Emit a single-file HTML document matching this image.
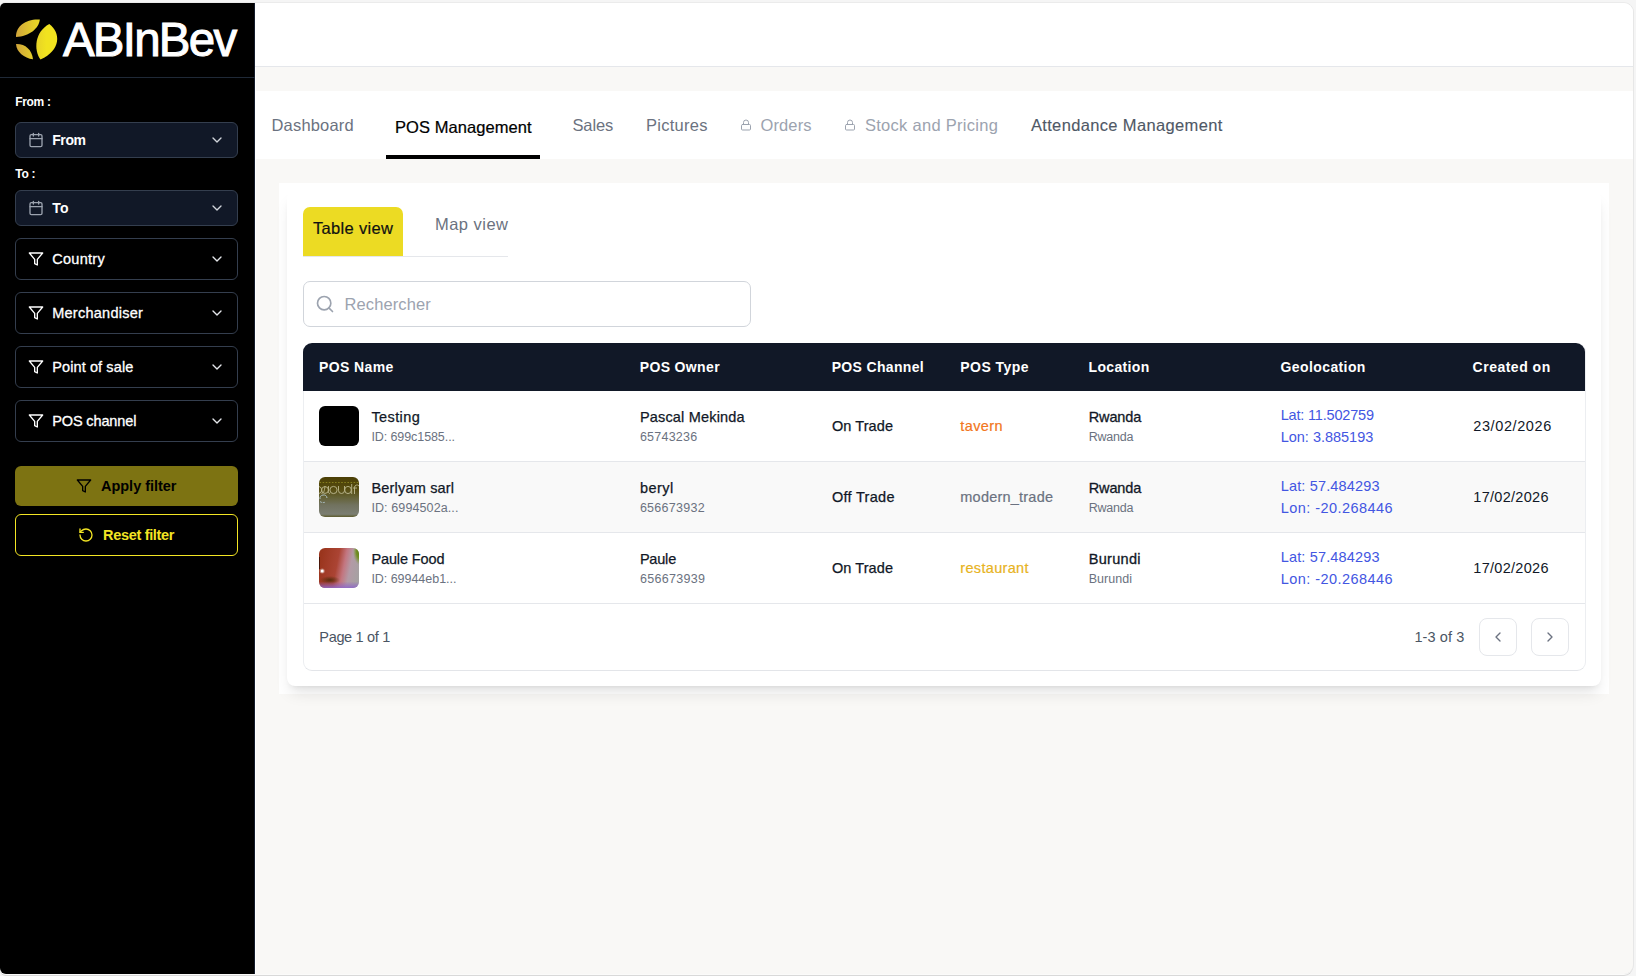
<!DOCTYPE html>
<html lang="en">
<head>
<meta charset="utf-8">
<title>POS Management</title>
<style>
*{box-sizing:border-box;margin:0;padding:0}
html,body{width:1636px;height:976px;overflow:hidden}
body{background:#f5f5f5;font-family:"Liberation Sans",sans-serif;color:#111827;position:relative}
.win{position:absolute;left:0;top:3px;width:1633px;height:971px;background:#f9f8f6;border-radius:5px 9px 9px 6px;overflow:hidden;box-shadow:1px 0 0 0 #e7e7e7,0 -1px 0 0 #ebebeb,0 1px 0 0 #fbfbfa,0 2px 0 0 #d9d9d9}
.topw{position:absolute;left:6px;top:2px;width:249px;height:1px;background:#fff}
.abs{position:absolute}
.grp{position:static;display:block}
.tx{position:absolute;white-space:nowrap;line-height:20px}
.side{position:absolute;left:0;top:0;width:255px;height:972px;background:#000;color:#fff;border-right:1px solid #151c2b;box-shadow:1px 0 0 0 #fff}
.logo{position:absolute;left:0;top:0;width:255px;height:75px;border-bottom:1px solid #1f2937}
.sel{position:absolute;left:15px;width:223px;border:1px solid #343e4e;border-radius:6px;background:#000}
.sel.date{background:#111827;border-color:#343e4e;height:36px}
.sel.flt{height:42px}
.btn{position:absolute;left:15px;width:223px;border-radius:6px}
.btn.apply{background:#7d7312}
.btn.reset{border:1px solid #f3e524;background:#000}
.top{position:absolute;left:255px;top:0;width:1378px;height:64px;background:#fff;border-bottom:1px solid #e5e7eb}
.tabs{position:absolute;left:255px;top:88px;width:1378px;height:68px;background:#fff}
.uline{position:absolute;left:131px;top:64px;width:154px;height:4px;background:#000}
.wrap{position:absolute;left:279px;top:180px;width:1330px;height:511px;background:#fff}
.card{position:absolute;left:287px;top:188px;width:1314px;height:495px;background:#fff;border-radius:8px;box-shadow:0 10px 15px -3px rgba(0,0,0,.1),0 4px 6px -4px rgba(0,0,0,.1)}
.vtab{position:absolute;left:303px;top:204px;width:100px;height:49px;background:#ecdb23;border-radius:7px 7px 0 0}
.vline{position:absolute;left:303px;top:253px;width:205px;height:1px;background:#e5e7eb}
.search{position:absolute;left:303px;top:278px;width:448px;height:45.5px;border:1px solid #d1d5db;border-radius:7px;background:#fff}
.tbl{position:absolute;left:303px;top:340px;width:1283px;height:327.5px;border:1px solid #eceef1;border-bottom-color:#e3e5e9;border-top:0;border-radius:9px;background:#fff;overflow:hidden}
.thead{position:absolute;left:303px;top:340px;width:1282px;height:48px;background:#111827;border-radius:9px 9px 0 0}
.row{position:absolute;left:0;width:1281px;height:71px;border-bottom:1px solid #e5e7eb;background:#fff}
.row.alt{background:#f9f9f9}
.thumb{position:absolute;left:319px;width:40px;height:40px;border-radius:6px;overflow:hidden}
.pbtn{position:absolute;width:38px;height:38px;border:1px solid #e5e7eb;border-radius:8px;background:#fff}
</style>
</head>
<body>
<div class="topw"></div>
<div class="win">

<aside class="side">
<div class="logo">
<svg class="abs" style="left:0;top:-3px" width="64" height="70" viewBox="0 0 64 70">
<defs><linearGradient id="lg" gradientUnits="userSpaceOnUse" x1="15" y1="0" x2="57" y2="0"><stop offset="0" stop-color="#cfa23c"/><stop offset="0.45" stop-color="#e4cf29"/><stop offset="0.75" stop-color="#f1e31f"/></linearGradient></defs>
<path d="M16 37 C15.500 25.500 27 18.500 39.800 19.500 C39 28.500 29 36.500 16 37Z" fill="url(#lg)"/>
<path d="M16 43.900 C25 43.500 32 49.500 33 59.200 C24 58 16.500 52 16 43.900Z" fill="url(#lg)"/>
<path d="M49.300 24 C61 33 61 50 40.500 59.600 C33.500 50 34.500 32 49.300 24Z" fill="url(#lg)"/>
</svg>
<svg class="abs" style="left:58px;top:10px" width="190" height="56" viewBox="0 0 190 56"><text x="4.900" y="42.700" font-family="Liberation Sans, sans-serif" font-size="47.500" fill="#fff" stroke="#fff" stroke-width="1" letter-spacing="-1.750">ABInBev</text></svg>
</div>
<span class="tx " id="lfrom" style="left:15.20px;top:88.74px;font-size:12px;color:#fff;letter-spacing:-0.326px;font-weight:700;">From :</span>
<div class="sel date" style="top:119px"></div>
<svg width="16" height="16" viewBox="0 0 24 24" fill="none" stroke="#9ca3af" stroke-width="2" stroke-linecap="round" stroke-linejoin="round" class="abs" style="left:28px;top:129px"><rect x="3" y="4" width="18" height="18" rx="2"/><path d="M16 2v4M8 2v4M3 10h18"/></svg>
<span class="tx " id="sfrom" style="left:52.20px;top:127.05px;font-size:14px;color:#fff;letter-spacing:-0.400px;font-weight:700;">From</span>
<svg width="16" height="16" viewBox="0 0 24 24" fill="none" stroke="#d1d5db" stroke-width="2" stroke-linecap="round" stroke-linejoin="round" class="abs" style="left:209px;top:129px"><path d="M6 9l6 6 6-6"/></svg>
<span class="tx " id="lto" style="left:15.20px;top:161.04px;font-size:12px;color:#fff;letter-spacing:-0.233px;font-weight:700;">To :</span>
<div class="sel date" style="top:187px"></div>
<svg width="16" height="16" viewBox="0 0 24 24" fill="none" stroke="#9ca3af" stroke-width="2" stroke-linecap="round" stroke-linejoin="round" class="abs" style="left:28px;top:197px"><rect x="3" y="4" width="18" height="18" rx="2"/><path d="M16 2v4M8 2v4M3 10h18"/></svg>
<span class="tx " id="sto" style="left:52.20px;top:195.05px;font-size:14px;color:#fff;letter-spacing:0.235px;font-weight:700;">To</span>
<svg width="16" height="16" viewBox="0 0 24 24" fill="none" stroke="#d1d5db" stroke-width="2" stroke-linecap="round" stroke-linejoin="round" class="abs" style="left:209px;top:197px"><path d="M6 9l6 6 6-6"/></svg>
<div class="sel flt" style="top:235px"></div>
<svg width="16" height="16" viewBox="0 0 24 24" fill="none" stroke="#fff" stroke-width="2" stroke-linecap="round" stroke-linejoin="round" class="abs" style="left:28px;top:248px"><path d="M22 3H2l8 9.46V19l4 2v-8.54L22 3z"/></svg>
<span class="tx " id="f0" style="left:52.20px;top:246.08px;font-size:14.5px;color:#fff;letter-spacing:0.288px;-webkit-text-stroke:0.3px #fff;">Country</span>
<svg width="16" height="16" viewBox="0 0 24 24" fill="none" stroke="#e5e7eb" stroke-width="2" stroke-linecap="round" stroke-linejoin="round" class="abs" style="left:209px;top:248px"><path d="M6 9l6 6 6-6"/></svg>
<div class="sel flt" style="top:289px"></div>
<svg width="16" height="16" viewBox="0 0 24 24" fill="none" stroke="#fff" stroke-width="2" stroke-linecap="round" stroke-linejoin="round" class="abs" style="left:28px;top:302px"><path d="M22 3H2l8 9.46V19l4 2v-8.54L22 3z"/></svg>
<span class="tx " id="f1" style="left:52.20px;top:300.08px;font-size:14.5px;color:#fff;letter-spacing:0.260px;-webkit-text-stroke:0.3px #fff;">Merchandiser</span>
<svg width="16" height="16" viewBox="0 0 24 24" fill="none" stroke="#e5e7eb" stroke-width="2" stroke-linecap="round" stroke-linejoin="round" class="abs" style="left:209px;top:302px"><path d="M6 9l6 6 6-6"/></svg>
<div class="sel flt" style="top:343px"></div>
<svg width="16" height="16" viewBox="0 0 24 24" fill="none" stroke="#fff" stroke-width="2" stroke-linecap="round" stroke-linejoin="round" class="abs" style="left:28px;top:356px"><path d="M22 3H2l8 9.46V19l4 2v-8.54L22 3z"/></svg>
<span class="tx " id="f2" style="left:52.20px;top:354.08px;font-size:14.5px;color:#fff;letter-spacing:0.108px;-webkit-text-stroke:0.3px #fff;">Point of sale</span>
<svg width="16" height="16" viewBox="0 0 24 24" fill="none" stroke="#e5e7eb" stroke-width="2" stroke-linecap="round" stroke-linejoin="round" class="abs" style="left:209px;top:356px"><path d="M6 9l6 6 6-6"/></svg>
<div class="sel flt" style="top:397px"></div>
<svg width="16" height="16" viewBox="0 0 24 24" fill="none" stroke="#fff" stroke-width="2" stroke-linecap="round" stroke-linejoin="round" class="abs" style="left:28px;top:410px"><path d="M22 3H2l8 9.46V19l4 2v-8.54L22 3z"/></svg>
<span class="tx " id="f3" style="left:52.20px;top:408.08px;font-size:14.5px;color:#fff;letter-spacing:-0.124px;-webkit-text-stroke:0.3px #fff;">POS channel</span>
<svg width="16" height="16" viewBox="0 0 24 24" fill="none" stroke="#e5e7eb" stroke-width="2" stroke-linecap="round" stroke-linejoin="round" class="abs" style="left:209px;top:410px"><path d="M6 9l6 6 6-6"/></svg>
<div class="btn apply" style="top:463px;height:40px"></div>
<svg width="16" height="16" viewBox="0 0 24 24" fill="none" stroke="#000" stroke-width="2" stroke-linecap="round" stroke-linejoin="round" class="abs" style="left:76px;top:475px"><path d="M22 3H2l8 9.46V19l4 2v-8.54L22 3z"/></svg>
<span class="tx " id="bapply" style="left:101.00px;top:472.98px;font-size:14.5px;color:#000;letter-spacing:-0.021px;font-weight:700;">Apply filter</span>
<div class="btn reset" style="top:511px;height:42px"></div>
<svg width="16" height="16" viewBox="0 0 24 24" fill="none" stroke="#f3e524" stroke-width="2" stroke-linecap="round" stroke-linejoin="round" class="abs" style="left:78px;top:524px"><path d="M3 12a9 9 0 1 0 9-9 9.75 9.75 0 0 0-6.74 2.74L3 8"/><path d="M3 3v5h5"/></svg>
<span class="tx " id="breset" style="left:103.00px;top:521.98px;font-size:14.5px;color:#f3e524;letter-spacing:-0.313px;font-weight:700;">Reset filter</span>
</aside>
<header class="top"></header>
<nav class="grp"><div class="tabs"><div class="uline"></div></div>
<span class="tx " id="t0" style="left:271.50px;top:112.48px;font-size:16.5px;color:#6b7280;letter-spacing:0.185px;">Dashboard</span>
<span class="tx " id="t1" style="left:395.00px;top:114.18px;font-size:16.5px;color:#000;letter-spacing:0.066px;-webkit-text-stroke:0.22px #000;">POS Management</span>
<span class="tx " id="t2" style="left:572.50px;top:112.48px;font-size:16.5px;color:#6b7280;letter-spacing:-0.144px;">Sales</span>
<span class="tx " id="t3" style="left:645.90px;top:112.48px;font-size:16.5px;color:#6b7280;letter-spacing:0.285px;">Pictures</span>
<svg width="12" height="12" viewBox="0 0 24 24" fill="none" stroke="#9ca3af" stroke-width="2" stroke-linecap="round" stroke-linejoin="round" class="abs" style="left:740px;top:115.7px"><rect x="3" y="11" width="18" height="11" rx="2"/><path d="M7 11V7a5 5 0 0 1 10 0v4"/></svg>
<span class="tx " id="t4" style="left:760.50px;top:112.48px;font-size:16.5px;color:#9ca3af;letter-spacing:0.115px;">Orders</span>
<svg width="12" height="12" viewBox="0 0 24 24" fill="none" stroke="#9ca3af" stroke-width="2" stroke-linecap="round" stroke-linejoin="round" class="abs" style="left:844px;top:115.7px"><rect x="3" y="11" width="18" height="11" rx="2"/><path d="M7 11V7a5 5 0 0 1 10 0v4"/></svg>
<span class="tx " id="t5" style="left:864.90px;top:112.48px;font-size:16.5px;color:#9ca3af;letter-spacing:0.288px;">Stock and Pricing</span>
<span class="tx " id="t6" style="left:1030.90px;top:112.48px;font-size:16.5px;color:#4f5866;letter-spacing:0.351px;-webkit-text-stroke:0.12px #4f5866;">Attendance Management</span>
</nav>
<main class="grp"><div class="wrap"></div><section class="card"></section>
<div class="grp views"><div class="vtab"></div><div class="vline"></div>
<span class="tx " id="v0" style="left:313.00px;top:214.58px;font-size:16.5px;color:#111;letter-spacing:0.329px;-webkit-text-stroke:0.2px #111;">Table view</span>
<span class="tx " id="v1" style="left:435.00px;top:211.28px;font-size:16.5px;color:#6b7280;letter-spacing:0.473px;">Map view</span>
</div><div class="grp searchbox"><div class="search"></div>
<svg width="20" height="20" viewBox="0 0 24 24" fill="none" stroke="#9ca3af" stroke-width="2" stroke-linecap="round" stroke-linejoin="round" class="abs" style="left:315px;top:291px"><circle cx="11" cy="11" r="8"/><path d="M21 21l-4.35-4.35"/></svg>
<span class="tx " id="srch" style="left:344.50px;top:291.28px;font-size:16.5px;color:#9ca3af;letter-spacing:0.107px;">Rechercher</span>
</div><div class="grp table"><div class="tbl">
<div class="row" style="top:48px"></div>
<div class="row alt" style="top:119px"></div>
<div class="row" style="top:190px"></div>
</div><div class="grp hrow"><div class="thead"></div>
<span class="tx " id="h0" style="left:319.00px;top:353.95px;font-size:14px;color:#fff;letter-spacing:0.402px;font-weight:700;">POS Name</span>
<span class="tx " id="h1" style="left:639.70px;top:353.95px;font-size:14px;color:#fff;letter-spacing:0.360px;font-weight:700;">POS Owner</span>
<span class="tx " id="h2" style="left:831.70px;top:353.95px;font-size:14px;color:#fff;letter-spacing:0.332px;font-weight:700;">POS Channel</span>
<span class="tx " id="h3" style="left:960.30px;top:353.95px;font-size:14px;color:#fff;letter-spacing:0.458px;font-weight:700;">POS Type</span>
<span class="tx " id="h4" style="left:1088.50px;top:353.95px;font-size:14px;color:#fff;letter-spacing:0.338px;font-weight:700;">Location</span>
<span class="tx " id="h5" style="left:1280.60px;top:353.95px;font-size:14px;color:#fff;letter-spacing:0.390px;font-weight:700;">Geolocation</span>
<span class="tx " id="h6" style="left:1472.60px;top:353.95px;font-size:14px;color:#fff;letter-spacing:0.497px;font-weight:700;">Created on</span>
</div>
<div class="grp trow">
<div class="thumb" style="top:403px"><div style="width:40px;height:40px;background:#000"></div></div>
<span class="tx " id="r0n" style="left:371.40px;top:404.18px;font-size:14.5px;color:#111827;letter-spacing:0.410px;-webkit-text-stroke:0.25px #111827;">Testing</span>
<span class="tx " id="r0i" style="left:371.40px;top:423.67px;font-size:12.5px;color:#6b7280;letter-spacing:-0.084px;">ID: 699c1585...</span>
<span class="tx " id="r0o" style="left:639.90px;top:404.18px;font-size:14.5px;color:#111827;letter-spacing:0.180px;-webkit-text-stroke:0.25px #111827;">Pascal Mekinda</span>
<span class="tx " id="r0p" style="left:639.90px;top:423.67px;font-size:12.5px;color:#6b7280;letter-spacing:0.241px;">65743236</span>
<span class="tx " id="r0c" style="left:831.90px;top:413.48px;font-size:14.5px;color:#111827;letter-spacing:0.093px;-webkit-text-stroke:0.25px #111827;">On Trade</span>
<span class="tx " id="r0t" style="left:960.30px;top:413.48px;font-size:14.5px;color:#f27620;letter-spacing:0.380px;-webkit-text-stroke:0.2px #f27620;">tavern</span>
<span class="tx " id="r0l" style="left:1088.70px;top:404.18px;font-size:14.5px;color:#111827;letter-spacing:-0.120px;-webkit-text-stroke:0.3px #111827;">Rwanda</span>
<span class="tx " id="r0m" style="left:1088.70px;top:423.77px;font-size:12.5px;color:#6b7280;letter-spacing:-0.232px;">Rwanda</span>
<span class="tx " id="r0a" style="left:1280.70px;top:401.98px;font-size:14.5px;color:#4356e2;letter-spacing:-0.183px;">Lat: 11.502759</span>
<span class="tx " id="r0b" style="left:1280.70px;top:424.08px;font-size:14.5px;color:#4356e2;letter-spacing:-0.011px;">Lon: 3.885193</span>
<span class="tx " id="r0d" style="left:1473.30px;top:412.98px;font-size:14.5px;color:#111827;letter-spacing:0.592px;">23/02/2026</span>
</div>
<div class="grp trow">
<div class="thumb" style="top:474px"><svg width="40" height="40" viewBox="0 0 40 40"><defs><linearGradient id="g2" x1="0" y1="0" x2="0" y2="1"><stop offset="0" stop-color="#4b3f06"/><stop offset="0.3" stop-color="#574d10"/><stop offset="0.48" stop-color="#625f30"/><stop offset="0.7" stop-color="#71725f"/><stop offset="0.93" stop-color="#7b7e72"/><stop offset="1" stop-color="#5d5b2c"/></linearGradient></defs><rect width="40" height="40" fill="url(#g2)"/><path d="M0.500 5.500h39" stroke="#a8a32e" stroke-width="1" stroke-dasharray="1.600 1.500" opacity=".6" fill="none"/><g fill="none" stroke="#d6d4ae" stroke-width="0.900" opacity=".8"><path d="M0 9.500a3.600 3.600 0 0 1 0 7"/><path d="M2.500 16.500c2-0.500 3-2 3.500-7.500M9.500 9v5.500a1.500 1.500 0 0 0 1.500 2"/><circle cx="6" cy="13" r="3.400"/><ellipse cx="14.500" cy="13" rx="3.600" ry="3.600"/><path d="M19.500 9v4.500a3 3 0 0 0 6 0V9"/><ellipse cx="29" cy="13" rx="3.300" ry="3.600"/><path d="M32.700 7v10M35.500 17V10.500a2.500 2.500 0 0 1 4.500-1.500M34 11h4"/></g><g fill="none" stroke="#bcd3de" stroke-width="1" opacity=".85"><path d="M1 22a3.500 3.500 0 0 1 7-1"/><path d="M1 24.500c1.500 1.200 3.500 1.500 5.500 0.500" stroke-dasharray="2 1"/></g></svg></div>
<span class="tx " id="r1n" style="left:371.40px;top:475.18px;font-size:14.5px;color:#111827;letter-spacing:0.193px;-webkit-text-stroke:0.25px #111827;">Berlyam sarl</span>
<span class="tx " id="r1i" style="left:371.40px;top:494.67px;font-size:12.5px;color:#6b7280;letter-spacing:0.109px;">ID: 6994502a...</span>
<span class="tx " id="r1o" style="left:639.90px;top:475.18px;font-size:14.5px;color:#111827;letter-spacing:0.493px;-webkit-text-stroke:0.25px #111827;">beryl</span>
<span class="tx " id="r1p" style="left:639.90px;top:494.67px;font-size:12.5px;color:#6b7280;letter-spacing:0.267px;">656673932</span>
<span class="tx " id="r1c" style="left:831.90px;top:484.48px;font-size:14.5px;color:#111827;letter-spacing:0.302px;-webkit-text-stroke:0.25px #111827;">Off Trade</span>
<span class="tx " id="r1t" style="left:960.30px;top:484.48px;font-size:14.5px;color:#6b7280;letter-spacing:0.220px;-webkit-text-stroke:0.2px #6b7280;">modern_trade</span>
<span class="tx " id="r1l" style="left:1088.70px;top:475.18px;font-size:14.5px;color:#111827;letter-spacing:-0.120px;-webkit-text-stroke:0.3px #111827;">Rwanda</span>
<span class="tx " id="r1m" style="left:1088.70px;top:494.77px;font-size:12.5px;color:#6b7280;letter-spacing:-0.232px;">Rwanda</span>
<span class="tx " id="r1a" style="left:1280.70px;top:472.98px;font-size:14.5px;color:#4356e2;letter-spacing:0.157px;">Lat: 57.484293</span>
<span class="tx " id="r1b" style="left:1280.70px;top:495.08px;font-size:14.5px;color:#4356e2;letter-spacing:0.441px;">Lon: -20.268446</span>
<span class="tx " id="r1d" style="left:1473.30px;top:483.98px;font-size:14.5px;color:#111827;letter-spacing:0.292px;">17/02/2026</span>
</div>
<div class="grp trow">
<div class="thumb" style="top:545px"><svg width="40" height="40" viewBox="0 0 40 40"><defs><linearGradient id="g3" gradientUnits="userSpaceOnUse" x1="0" y1="18" x2="40" y2="26"><stop offset="0" stop-color="#9a351d"/><stop offset="0.42" stop-color="#ab4434"/><stop offset="0.6" stop-color="#c37680"/><stop offset="0.76" stop-color="#b39aa6"/><stop offset="1" stop-color="#a5a1a2"/></linearGradient><radialGradient id="g3b" gradientUnits="userSpaceOnUse" cx="41" cy="3" r="14" gradientTransform="translate(20.500 0) scale(0.500 1)"><stop offset="0" stop-color="#567d08"/><stop offset="0.55" stop-color="#6a8c14" stop-opacity=".85"/><stop offset="1" stop-color="#7a9a30" stop-opacity="0"/></radialGradient><linearGradient id="g3c" x1="0" y1="0" x2="0" y2="1"><stop offset="0.840" stop-color="#8a5fc4" stop-opacity="0"/><stop offset="1" stop-color="#8f68c8" stop-opacity=".9"/></linearGradient><radialGradient id="g3d" gradientUnits="userSpaceOnUse" cx="11" cy="32" r="10" gradientTransform="translate(0 19.200) scale(1 0.400)"><stop offset="0" stop-color="#4a2a08" stop-opacity=".85"/><stop offset="1" stop-color="#4a2a08" stop-opacity="0"/></radialGradient></defs><rect width="40" height="40" fill="url(#g3)"/><rect width="40" height="40" fill="url(#g3d)"/><rect width="40" height="40" fill="url(#g3c)"/><rect width="40" height="40" fill="url(#g3b)"/><circle cx="3.200" cy="23" r="2.500" fill="#fff" opacity=".35"/><circle cx="3.200" cy="23" r="1.500" fill="#fff"/><rect x="0" y="9" width="1" height="12" fill="#2a0a00" opacity=".7"/></svg></div>
<span class="tx " id="r2n" style="left:371.40px;top:546.18px;font-size:14.5px;color:#111827;letter-spacing:-0.107px;-webkit-text-stroke:0.25px #111827;">Paule Food</span>
<span class="tx " id="r2i" style="left:371.40px;top:565.67px;font-size:12.5px;color:#6b7280;letter-spacing:-0.034px;">ID: 69944eb1...</span>
<span class="tx " id="r2o" style="left:639.90px;top:546.18px;font-size:14.5px;color:#111827;letter-spacing:-0.196px;-webkit-text-stroke:0.25px #111827;">Paule</span>
<span class="tx " id="r2p" style="left:639.90px;top:565.67px;font-size:12.5px;color:#6b7280;letter-spacing:0.304px;">656673939</span>
<span class="tx " id="r2c" style="left:831.90px;top:555.48px;font-size:14.5px;color:#111827;letter-spacing:0.093px;-webkit-text-stroke:0.25px #111827;">On Trade</span>
<span class="tx " id="r2t" style="left:960.30px;top:555.48px;font-size:14.5px;color:#e8b31e;letter-spacing:0.324px;-webkit-text-stroke:0.2px #e8b31e;">restaurant</span>
<span class="tx " id="r2l" style="left:1088.70px;top:546.18px;font-size:14.5px;color:#111827;letter-spacing:0.304px;-webkit-text-stroke:0.3px #111827;">Burundi</span>
<span class="tx " id="r2m" style="left:1088.70px;top:565.77px;font-size:12.5px;color:#6b7280;letter-spacing:0.036px;">Burundi</span>
<span class="tx " id="r2a" style="left:1280.70px;top:543.98px;font-size:14.5px;color:#4356e2;letter-spacing:0.157px;">Lat: 57.484293</span>
<span class="tx " id="r2b" style="left:1280.70px;top:566.08px;font-size:14.5px;color:#4356e2;letter-spacing:0.441px;">Lon: -20.268446</span>
<span class="tx " id="r2d" style="left:1473.30px;top:554.98px;font-size:14.5px;color:#111827;letter-spacing:0.292px;">17/02/2026</span>
</div>
<div class="grp tfoot">
<span class="tx " id="pg" style="left:319.30px;top:623.78px;font-size:14.5px;color:#4b5563;letter-spacing:-0.327px;">Page 1 of 1</span>
<span class="tx " id="cnt" style="left:1414.40px;top:623.78px;font-size:14.5px;color:#4b5563;letter-spacing:0.104px;">1-3 of 3</span>
<div class="pbtn" style="left:1479px;top:615px"></div>
<svg width="16" height="16" viewBox="0 0 24 24" fill="none" stroke="#6b7280" stroke-width="2" stroke-linecap="round" stroke-linejoin="round" class="abs" style="left:1490px;top:626px"><path d="M15 18l-6-6 6-6"/></svg>
<div class="pbtn" style="left:1531px;top:615px"></div>
<svg width="16" height="16" viewBox="0 0 24 24" fill="none" stroke="#6b7280" stroke-width="2" stroke-linecap="round" stroke-linejoin="round" class="abs" style="left:1542px;top:626px"><path d="M9 18l6-6-6-6"/></svg>
</div></div></main>
</div>
</body>
</html>
